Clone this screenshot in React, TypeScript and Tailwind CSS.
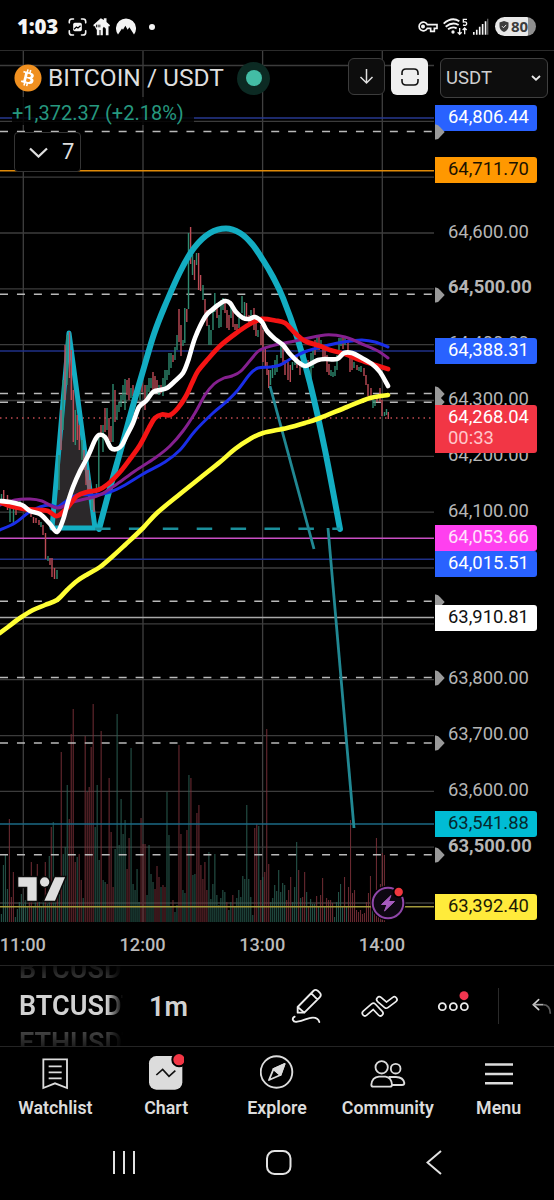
import type { ReactNode } from 'react';
import clsx from 'clsx';
import { FaBitcoin } from 'react-icons/fa';

type Point = [number, number];
type Candle = [number, number, number, 'r' | 'g'];

const CHART_TOP = 50;
const CHART_RIGHT = 434;
const VOLUME_BASE = 922;

const gridRows = [65.5, 121.3, 177.2, 233, 288.9, 344.7, 400.5, 456.4, 512.2, 568, 623.9, 679.7, 735.6, 791.4, 847.2, 903];
const gridCols = [23.3, 143, 262.6, 382.3];

const dashedLevels = [131.5, 294.3, 393.5, 402.2, 601.3, 677.5, 743, 854.7];

const solidLevels = [
  { y: 118, color: '#27388f' },
  { y: 170.7, color: '#e08a08' },
  { y: 351, color: '#1f3088' },
  { y: 538.2, color: '#c94fc4' },
  { y: 559.2, color: '#1f3088' },
  { y: 617.6, color: '#a9a9a9' },
  { y: 824, color: '#1b6a86' },
  { y: 906.7, color: '#a39a3c' },
];

const averages: { color: string; width: number; points: Point[] }[] = [
  {
    color: '#ffff35',
    width: 4.6,
    points: [[0, 633], [8, 627], [20, 618], [33, 610], [45, 605], [57, 600], [67, 590], [77, 581], [88, 574], [100, 567], [113, 556], [125, 545], [143, 528], [157, 513], [180, 494], [200, 478], [220, 462], [235, 449], [250, 439], [263, 433], [287, 428], [305, 423], [320, 418], [347, 407], [370, 398], [388, 395]],
  },
  {
    color: '#1a2ee8',
    width: 3,
    points: [[0, 530], [15, 523], [28, 513], [40, 507], [50, 505], [57, 507], [65, 502], [77, 495], [95, 495], [110, 492], [125, 485], [143, 474], [165, 462], [180, 450], [195, 431], [213, 413], [225, 403], [237, 391], [250, 374], [258, 368], [270, 367], [280, 365], [292, 358], [307, 351], [325, 346], [338, 343], [352, 341], [362, 340], [375, 342], [388, 347]],
  },
  {
    color: '#85208f',
    width: 3,
    points: [[0, 505], [15, 500], [30, 499], [42, 501], [57, 508], [70, 503], [85, 499], [100, 495], [117, 484], [135, 471], [155, 458], [170, 446], [183, 431], [195, 413], [205, 395], [214, 384], [224, 378], [232, 376], [241, 371], [253, 357], [260, 350], [275, 345], [295, 341], [325, 335], [345, 337], [362, 344], [378, 351], [388, 358]],
  },
  {
    color: '#f51414',
    width: 4.8,
    points: [[0, 502], [10, 506], [25, 509], [38, 510], [48, 511], [57, 516], [67, 508], [77, 496], [87, 492], [98, 490], [108, 484], [120, 472], [130, 459], [140, 445], [150, 426], [155, 418], [162, 414.5], [170, 415], [178, 408], [186, 396], [192, 383], [198, 371], [208, 359], [220, 346], [235, 334], [250, 324], [262, 319], [275, 320.5], [285, 323], [295, 333], [305, 341], [320, 346], [330, 350], [345, 354], [360, 360], [375, 365], [388, 369]],
  },
  {
    color: '#ffffff',
    width: 4.6,
    points: [[0, 501], [10, 502], [22, 505], [30, 511], [40, 514], [50, 524], [57, 532], [63, 520], [68, 502], [73, 487], [80, 471], [88, 456], [95, 440], [99, 435], [105, 437], [111, 448], [117, 449], [122, 445], [127, 435], [133, 423], [139, 407], [146, 401], [153, 392], [160, 390], [167, 388], [175, 381], [183, 373], [188, 361], [195, 338], [205, 317], [212, 310], [218, 305], [225, 301], [230, 303], [236, 312], [243, 318], [249, 319], [255, 317], [262, 322], [267, 331], [275, 339], [283, 345], [290, 354], [298, 362], [305, 366], [312, 363], [318, 360], [325, 359], [337, 359], [344, 353], [352, 353], [362, 358], [372, 364], [380, 372], [388, 386]],
  },
];

const arc: Point[] = [[99, 529], [110, 488], [123, 442], [134, 402], [145, 364], [154, 334], [164, 308], [180, 272], [194, 248], [210, 233], [226, 228.5], [240, 233], [252, 244], [263, 260], [273, 277], [283, 298], [297, 337], [310, 383], [325, 450], [340, 529]];

const candles: Candle[] = [
  [1.5, 494, 506, 'g'], [3.7, 490, 502, 'r'], [7.5, 495, 510, 'r'], [10, 500, 522, 'g'], [13.5, 505, 524, 'g'], [16, 503, 515, 'r'], [20, 500, 508, 'g'],
  [31, 512, 517, 'r'], [33.5, 517, 523, 'r'], [36, 518, 523, 'r'], [39, 520, 525, 'r'], [41, 522, 527, 'g'], [43, 525, 535, 'r'], [45.5, 533, 559, 'r'], [48, 556, 561, 'g'], [50, 558, 565, 'r'], [52, 558, 577, 'r'], [54.5, 568, 579, 'r'], [57, 570, 579, 'g'],
  [59, 455, 490, 'g'], [61, 410, 450, 'r'], [63, 380, 430, 'g'], [65, 345, 400, 'r'], [67, 335, 385, 'g'], [69.5, 332, 378, 'r'], [71.3, 350, 400, 'r'], [73.3, 390, 442, 'r'], [75.3, 410, 445, 'g'], [77.3, 415, 440, 'r'], [79.3, 425, 450, 'r'], [82, 440, 460, 'g'], [84, 450, 470, 'r'], [86, 460, 485, 'r'], [88, 470, 495, 'r'], [90, 480, 500, 'r'], [92, 490, 510, 'g'], [94, 497, 512, 'r'], [96.5, 484, 495, 'g'], [98.8, 435, 490, 'g'],
  [101, 425, 436, 'r'], [103, 425, 452, 'g'], [105, 408, 432, 'r'], [107, 408, 430, 'g'], [109, 418, 440, 'r'], [111, 426, 442, 'r'], [113, 384, 442, 'g'], [115, 390, 422, 'r'], [117, 405, 420, 'g'], [119, 402, 412, 'g'], [121, 395, 407, 'g'], [123, 385, 400, 'g'], [125, 379, 410, 'g'], [127, 380, 395, 'r'], [129, 378, 400, 'r'], [131, 388, 398, 'g'], [133, 385, 396, 'r'],
  [140, 375, 400, 'g'], [142, 367, 392, 'r'], [145, 385, 410, 'r'], [147, 385, 402, 'g'], [149, 378, 392, 'g'], [151, 378, 388, 'g'], [153, 372, 390, 'r'], [155, 376, 390, 'r'], [157, 380, 388, 'r'], [159, 385, 395, 'g'], [161, 385, 393, 'r'], [163, 378, 396, 'g'], [165, 370, 390, 'g'], [167, 370, 380, 'g'], [169, 353, 375, 'g'], [171, 353, 368, 'g'], [173, 355, 362, 'r'], [175, 347, 360, 'g'], [177, 335, 350, 'g'], [179, 309, 342, 'r'], [181, 325, 356, 'r'], [183, 340, 346, 'g'], [184.8, 308, 343, 'g'], [186.8, 309, 322, 'r'], [188.5, 233, 309, 'g'], [190.6, 227, 264, 'r'], [192.5, 255, 275, 'g'], [194.5, 260, 280, 'r'], [196.5, 253, 265, 'g'], [198.6, 253, 290, 'r'], [200.6, 275, 291, 'r'], [203, 285, 300, 'g'], [205, 299, 319, 'r'], [207, 310, 326, 'r'], [209, 325, 345, 'g'], [211, 330, 345, 'g'], [213, 310, 330, 'g'], [214.8, 293, 312, 'g'], [217, 308, 318, 'r'], [219, 315, 328, 'g'], [221, 300, 327, 'g'], [223, 298, 310, 'g'], [225, 303, 313, 'r'], [227, 310, 328, 'r'], [229, 315, 330, 'r'], [231, 305, 318, 'g'], [233, 310, 327, 'r'], [235, 324, 330, 'r'], [237, 324, 332, 'r'], [239, 318, 328, 'g'], [242, 296, 313, 'g'], [244.5, 302, 317, 'g'], [246.5, 303, 320, 'r'], [249, 315, 325, 'r'], [251, 310, 322, 'g'], [254, 308, 330, 'r'], [256, 320, 336, 'r'], [258, 330, 337, 'g'], [261, 325, 345, 'r'], [263, 330, 362, 'r'], [265.3, 348, 367, 'r'], [267, 362, 375, 'r'], [268.7, 370, 388, 'r'], [270.5, 370, 385, 'g'], [272.5, 365, 378, 'g'], [275, 360, 375, 'g'], [277, 355, 372, 'g'], [281, 345, 358, 'g'], [283, 348, 365, 'r'], [285, 360, 375, 'r'], [288, 362, 380, 'r'], [290.3, 365, 382, 'r'], [292.5, 362, 370, 'g'], [295, 355, 365, 'g'], [297, 355, 368, 'r'], [300, 363, 375, 'r'], [302, 358, 368, 'g'], [305, 350, 362, 'g'], [308, 360, 380, 'r'], [311, 353, 380, 'g'], [313, 350, 368, 'g'], [315, 340, 355, 'r'], [317, 336, 350, 'g'], [319, 336, 350, 'r'], [321, 340, 348, 'g'], [323, 345, 358, 'r'], [325, 345, 357, 'r'], [327, 355, 372, 'r'], [329, 364, 375, 'r'], [331, 370, 376, 'g'], [333, 372, 377, 'g'], [335, 366, 376, 'g'], [337, 355, 370, 'g'], [339, 338, 350, 'g'], [341, 338, 346, 'g'], [343, 336, 349, 'r'], [345, 337, 345, 'g'], [348, 340, 355, 'r'], [350, 355, 372, 'r'], [352, 358, 370, 'r'], [354, 362, 368, 'g'], [357, 365, 370, 'r'], [359, 367, 371, 'g'], [361, 366, 372, 'g'], [364, 368, 376, 'r'], [366, 375, 385, 'r'], [368, 384, 396, 'r'], [371, 388, 400, 'r'], [373, 395, 408, 'g'], [375, 400, 406, 'g'], [377, 396, 402, 'r'], [380, 388, 402, 'r'], [382, 400, 416, 'r'], [384.5, 412, 416, 'g'], [386.5, 409, 415, 'g'], [388.3, 412, 419, 'r'],
];

// one bar per minute, negative heights are down bars
const volumes = [
  8, 57, 67, 33, -103, -25, -50, 5, 13, 20, 28, 18, 22, 15, -20, -60, 16, 22, -58, 20, 15, 22, -60, 18, 66, -95, 100, 30, -32, 28,
  -170, 68, 75, 137, -103, -188, -213, -60, 65, -68, -42, 24, -186, -130, -135, -175, -218, 95, 137, 62, -191, 42, 40, -38, -144, -90, -35, 73, 208, 77,
  123, 88, 102, -53, -84, 174, 38, 32, 53, 20, -104, -78, -78, 27, 77, 48, 40, -33, -56, -45, 35, -37, -35, 130, 87, 15, -22, 10, 17, -177,
  -88, 32, 29, -92, 147, -144, 47, 48, -109, -117, -57, -43, -60, -32, 70, 23, 38, 68, 27, 17, 24, 32, 30, -20, 12, 20, -27, 15, 24, 32,
  25, 46, 43, 117, 43, 25, 7, -94, -98, 96, -42, 45, -50, -193, -58, 20, 24, 37, 31, 52, 30, 39, 37, -22, -32, -45, 20, 35, 80, -52,
  24, -25, -50, 30, -15, 23, 18, 18, -26, 15, -27, -44, 15, -24, -22, -22, -19, 5, 20, 30, 38, 15, -45, 15, -35, -102, -29, -32, -12, -10,
  -12, -8, -9, -20, -29, -46, 15, -14, -84, -20, -38, -69, -67,
];

type Mark =
  | { kind: 'price'; y: number; text: string; bold?: boolean }
  | { kind: 'flag'; y: number }
  | { kind: 'badge'; y: number; text: string; sub?: string; tone: string };

// later marks cover earlier ones
const axisMarks: Mark[] = [
  { kind: 'price', y: 231.5, text: '64,600.00' },
  { kind: 'price', y: 287.3, text: '64,500.00', bold: true },
  { kind: 'price', y: 343.2, text: '64,400.00' },
  { kind: 'price', y: 398.8, text: '64,300.00' },
  { kind: 'price', y: 454.8, text: '64,200.00' },
  { kind: 'price', y: 510.6, text: '64,100.00' },
  { kind: 'price', y: 678.2, text: '63,800.00' },
  { kind: 'price', y: 734, text: '63,700.00' },
  { kind: 'price', y: 789.8, text: '63,600.00' },
  { kind: 'price', y: 845.6, text: '63,500.00', bold: true },
  { kind: 'badge', y: 105, text: '64,806.44', tone: 'bg-[#2962ff] text-white' },
  { kind: 'flag', y: 132 },
  { kind: 'flag', y: 295 },
  { kind: 'flag', y: 394 },
  { kind: 'flag', y: 402 },
  { kind: 'flag', y: 601.5 },
  { kind: 'flag', y: 678 },
  { kind: 'flag', y: 743 },
  { kind: 'flag', y: 855 },
  { kind: 'badge', y: 157.3, text: '64,711.70', tone: 'bg-[#ff9800] text-[#1a1200]' },
  { kind: 'badge', y: 338, text: '64,388.31', tone: 'bg-[#2962ff] text-white' },
  { kind: 'badge', y: 405, text: '64,268.04', sub: '00:33', tone: 'bg-[#f23645] text-white' },
  { kind: 'badge', y: 525, text: '64,053.66', tone: 'bg-[#ff40ef] text-[#ffe2fc]' },
  { kind: 'badge', y: 551.2, text: '64,015.51', tone: 'bg-[#2962ff] text-white' },
  { kind: 'badge', y: 604.5, text: '63,910.81', tone: 'bg-white text-[#111111]' },
  { kind: 'badge', y: 810.7, text: '63,541.88', tone: 'bg-[#00bcd4] text-[#06292e]' },
  { kind: 'badge', y: 894, text: '63,392.40', tone: 'bg-[#ffeb3b] text-[#1c1a05]' },
];

const times = ['11:00', '12:00', '13:00', '14:00'];

function smooth(points: Point[]) {
  let d = `M${points[0][0]} ${points[0][1]}`;
  for (let i = 0; i < points.length - 1; i++) {
    const p0 = points[i - 1] ?? points[i];
    const p1 = points[i];
    const p2 = points[i + 1];
    const p3 = points[i + 2] ?? p2;
    d += `C${p1[0] + (p2[0] - p0[0]) / 6} ${p1[1] + (p2[1] - p0[1]) / 6} ${p2[0] - (p3[0] - p1[0]) / 6} ${p2[1] - (p3[1] - p1[1]) / 6} ${p2[0]} ${p2[1]}`;
  }
  return d;
}

function StatusBar() {
  return (
    <div className="flex h-[50px] items-center pt-[3px] pl-[17px] pr-[18px] text-[#f4f4f4]">
      <span className="w-[51px] font-['Open_Sans'] text-[20.500px] font-extrabold leading-none tracking-[-0.2px]">1:03</span>
      <svg className="h-[18px] w-[19px]" viewBox="205 51 57 56" fill="none" stroke="currentColor" strokeWidth="5">
        <path d="M208 66V62Q208 54 216 54H221M246 54H251Q259 54 259 62V66M259 91V96Q259 104 251 104H246M221 104H216Q208 104 208 96V91" strokeLinecap="round" />
        <rect x="220" y="66" width="27" height="26" rx="5" fill="currentColor" stroke="none" />
        <path d="M223 86l7-7 5 3 8-7" stroke="#000" strokeWidth="4" />
      </svg>
      <svg className="ml-[6px] h-[18px] w-[17px]" viewBox="280 52 50 54" fill="currentColor">
        <path d="M281 72L303 53L312 58V53H320V64L330 73V77H326V104H318V84L312 78L309 83V104H302V88H299V104H291V88L286 80V77H281Z" />
        <path d="M290 72V80M295 72V80M300 72V80M313 88V104" stroke="#000" strokeWidth="2.5" />
      </svg>
      <svg className="ml-[6px] h-[17px] w-[20px]" viewBox="348 54 60 50" fill="currentColor">
        <path d="M354 103A30 30 0 1 1 402 103L388 81L383 89L376 77L369 89L366 85Z" />
      </svg>
      <span className="ml-[13px] size-1.5 rounded-full bg-current" />
      <div className="ml-auto flex items-center">
        <svg className="h-[13px] w-[20px]" viewBox="425 62 60 37" fill="none" stroke="currentColor" strokeWidth="5">
          <path d="M453 75A13 13 0 1 0 453 86H463V95H474V86H482V75Z" />
          <circle cx="440" cy="80.500" r="3.500" fill="currentColor" />
        </svg>
        <svg className="ml-[5px] h-[18px] w-[25px]" viewBox="500 52 75 54" fill="none" stroke="currentColor" strokeWidth="5.500">
          <path d="M502 69Q527 47 549 62M508 78Q529 62 547 73M515 86Q529 76 541 83" />
          <circle cx="530" cy="94" r="5" fill="currentColor" stroke="none" />
          <path d="M572 56H561V64Q571 62 571 69T560 73" strokeWidth="4" />
          <path d="M550 82V101M544 95L550 101L556 95M565 101V82M559 88L565 82L571 88" strokeWidth="4" />
        </svg>
        <svg className="ml-[4px] h-[17px] w-[17px]" viewBox="588 53 50 52" fill="currentColor">
          <path d="M590 96h5v8h-5zM599 89h5v15h-5zM608 80h5v24h-5zM617 71h5v33h-5zM626 63h5v41h-5z" />
          <path d="M633 55h4v49h-4z" opacity="0.4" />
        </svg>
        <div className="ml-[6px] flex h-[19px] w-[41px] items-center rounded-full bg-[linear-gradient(90deg,#e8e8e8_80%,#8e8e8e_80%)] pl-[4px] text-[#3c3c3c]">
          <svg className="h-[11px] w-[10px]" viewBox="0 0 10 11">
            <path d="M5 0L9.500 1.500V5Q9.500 9 5 11Q0.500 9 0.500 5V1.500Z" fill="currentColor" />
            <path d="M3 5.200L4.500 6.700L7.200 3.900" fill="none" stroke="#e8e8e8" />
          </svg>
          <span className="ml-[2px] font-['Open_Sans'] text-[15px] font-bold leading-none">80</span>
        </div>
      </div>
    </div>
  );
}

function ChartCanvas() {
  return (
    <svg className="block h-[872px] w-[554px]" viewBox="0 50 554 872" fill="none">
      {gridCols.map((x) => (
        <path key={x} d={`M${x} ${CHART_TOP}V${VOLUME_BASE}`} stroke="#404040" strokeWidth="1.3" />
      ))}
      {gridRows.map((y) => (
        <path key={y} d={`M0 ${y}H${CHART_RIGHT}`} stroke="#3c3c3c" strokeWidth="1.3" />
      ))}

      {/* Volume */}
      {volumes.map((v, i) => (
        <path
          key={i}
          d={`M${1.4 + i * 1.995} ${VOLUME_BASE}v${-Math.abs(v)}`}
          stroke={v < 0 ? '#7a3038' : '#2c6155'}
          strokeWidth="1.100"
          opacity="0.850"
        />
      ))}

      {/* Levels */}
      {solidLevels.map((level) => (
        <path key={level.y} d={`M0 ${level.y}H${CHART_RIGHT}`} stroke={level.color} strokeWidth="1.500" />
      ))}
      {dashedLevels.map((y) => (
        <path key={y} d={`M0 ${y}H432`} stroke="#b9b9b9" strokeWidth="1.500" strokeDasharray="8 8.950" />
      ))}
      <path d="M0 418H434" stroke="#c04a50" strokeWidth="1.500" strokeDasharray="1.500 4" />

      {/* Drawings */}
      <path d="M53 528L69 333L95 528Z" fill="#2b282a" />
      <path d="M52 528L69 333L95 528Z" stroke="#13adc2" strokeWidth="5" strokeLinejoin="round" />
      {candles.map(([x, top, bottom, dir]) => (
        <path key={x} d={`M${x} ${top}V${bottom}`} stroke={dir === 'r' ? '#bd4b56' : '#2e8a70'} strokeWidth="1.400" />
      ))}
      <path d={smooth(arc)} stroke="#13adc2" strokeWidth="6" strokeLinecap="round" />
      <path d="M95 528.700H340" stroke="#1b8f9b" strokeWidth="2.600" strokeDasharray="15.500 18.400" />
      <path d="M270 386L314 549" stroke="#218893" strokeWidth="2.800" />
      <path d="M328 528L354 828" stroke="#218893" strokeWidth="2.800" />

      {averages.map((line) => (
        <path key={line.color} d={smooth(line.points)} stroke={line.color} strokeWidth={line.width} strokeLinejoin="round" strokeLinecap="round" />
      ))}

      {/* TradingView mark */}
      <g transform="translate(0 690) scale(0.3333)" fill="#dedede" stroke="#0a0a0a" strokeWidth="9" paintOrder="stroke">
        <path d="M55 562H110V632H82V590H55Z" />
        <path d="M165 562H195L165 632H133Z" />
        <circle cx="134" cy="576" r="14" />
      </g>

      {/* Flash news */}
      <circle cx="388" cy="903" r="17.500" fill="#000" />
      <circle cx="388" cy="903" r="15.300" fill="#0d0711" stroke="#8f46a8" strokeWidth="2" />
      <path d="M391 895.500L381.500 904.500H387L384.500 911L394.500 901.500H388.500Z" fill="#a65bbd" stroke="#a65bbd" strokeLinejoin="round" />
      <circle cx="398.700" cy="892" r="6" fill="#000" />
      <circle cx="398.700" cy="892" r="4.200" fill="#f0383f" />
    </svg>
  );
}

function AxisMark({ mark }: { mark: Mark }) {
  if (mark.kind === 'flag') {
    return (
      <svg className="absolute left-0 h-4 w-2.5" style={{ top: mark.y - CHART_TOP - 8 }} viewBox="0 0 10 16">
        <path d="M0 0.500Q3 0 5 3L9.700 8L5 13Q3 16 0 15.500Z" fill="#999999" />
      </svg>
    );
  }
  if (mark.kind === 'price') {
    return (
      <span
        className={clsx('absolute left-[13px] leading-6 text-[#b5b5b5]', mark.bold && 'font-bold')}
        style={{ top: mark.y - CHART_TOP - 12 }}
      >
        {mark.text}
      </span>
    );
  }
  return (
    <div
      className={clsx('absolute left-0 w-[102px] rounded-r-[3px] pl-[13px]', mark.sub ? 'h-[48px]' : 'h-[26px]', mark.tone)}
      style={{ top: mark.y - CHART_TOP }}
    >
      <div className="h-6 leading-6">{mark.text}</div>
      {mark.sub && <div className="-mt-px h-5 leading-5 text-[#ffc6ca]">{mark.sub}</div>}
    </div>
  );
}

function ChartHeader() {
  return (
    <div className="pt-[7px] pr-[6px] pl-[14px]">
      <div className="flex items-start">
        <div className="flex h-10 items-center">
          <div className="size-7 rounded-full bg-[radial-gradient(circle,white_60%,transparent_62%)]">
            <FaBitcoin className="size-7 text-[#f09020]" />
          </div>
          <span className="ml-[6px] w-[177px] whitespace-nowrap text-[24.500px] leading-none text-[#dedede]">BITCOIN / USDT</span>
          <span className="ml-[12px] flex size-[33px] items-center justify-center rounded-full bg-[#0c2a23]">
            <span className="size-4 rounded-full bg-[#43bda5]" />
          </span>
        </div>
        <div className="ml-auto flex">
          <div className="flex h-[37px] w-[37px] items-center justify-center rounded-md border border-[#3c3c3c] bg-[#0d0d0d]">
            <svg className="h-[17px] w-[15px]" viewBox="0 0 15 17" fill="none" stroke="#e0e0e0" strokeWidth="1.500">
              <path d="M7.500 1V15M1.500 9L7.500 15L13.500 9" />
            </svg>
          </div>
          <div className="ml-[6px] flex h-[37px] w-[37px] items-center justify-center rounded-md bg-[#efefef]">
            <svg className="size-[18px]" viewBox="0 0 18 18" fill="none" stroke="#111" strokeWidth="1.600">
              <path d="M1 7V5Q1 1 5 1H13Q17 1 17 5V7M17 11V13Q17 17 13 17H5Q1 17 1 13V11" />
            </svg>
          </div>
          <div className="ml-[12px] flex h-[40px] w-[108px] items-center justify-between rounded-md border border-[#404040] bg-[#0d0d0d] pr-1.5 pl-[5px]">
            <span className="text-[18.500px] leading-none text-[#d0d0d0]">USDT</span>
            <svg className="h-[6px] w-[10px]" viewBox="0 0 10 6" fill="none" stroke="#e8e8e8" strokeWidth="1.800">
              <path d="M1 1L5 4.700L9 1" />
            </svg>
          </div>
        </div>
      </div>
      <div className="-mt-px -ml-[2px] flex h-[28px] w-[182px] items-end bg-black/85">
        <span className="whitespace-nowrap text-[20px] leading-[24px] text-[#26987f]">+1,372.37 (+2.18%)</span>
      </div>
      <div className="mt-[7px] flex h-[40px] w-[67px] items-center rounded border border-[#343434] bg-black pl-[14px]">
        <svg className="h-[11px] w-[19px]" viewBox="0 0 19 11" fill="none" stroke="#dedede" strokeWidth="2.300">
          <path d="M1 1.500L9.500 9.500L18 1.500" />
        </svg>
        <span className="ml-[14px] text-[22px] leading-none text-[#dedede]">7</span>
      </div>
    </div>
  );
}

function Toolbar() {
  return (
    <div className="flex h-[82px] items-center border-y border-[#242424]">
      <div className="h-[80px] w-[149px] overflow-hidden pl-[19px]">
        <div className="-mt-[15px] w-[104px] overflow-hidden text-[27px] font-semibold leading-[37px] text-[#d2d2d2] [mask-image:linear-gradient(90deg,#000_84%,transparent)]">
          <div className="bg-[linear-gradient(#111_40%,#555)] bg-clip-text text-transparent">BTCUSDT</div>
          <div>BTCUSDT</div>
          <div className="bg-[linear-gradient(#555,#111_70%)] bg-clip-text text-transparent">ETHUSDT</div>
        </div>
      </div>
      <span className="w-[121px] pt-0.5 text-[27px] font-semibold leading-none text-[#d2d2d2]">1m</span>
      <div className="flex w-[73.500px] justify-center">
        <svg className="h-9 w-8" viewBox="42 114 96 108" fill="none" stroke="#ededed" strokeWidth="5.500" strokeLinejoin="round" strokeLinecap="round">
          <path d="M62 171L109 123Q115 117 122 122L128 128Q135 135 128 142L82 188H62ZM62 171L82 188M103 130L121 148" />
          <path d="M53 200C43 205 47 218 61 215C84 211 91 203 108 203Q123 203 127 216" />
        </svg>
      </div>
      <div className="flex w-[73.500px] justify-center">
        <svg className="h-6 w-[38px]" viewBox="253 132 114 69" fill="none" strokeLinejoin="round" strokeLinecap="round">
          <path d="M265 188L290 166L311 188M308 147L329 165L353 147" stroke="#ededed" strokeWidth="21" />
          <path d="M265 188L290 166L311 188M308 147L329 165L353 147" stroke="#000" strokeWidth="11" />
        </svg>
      </div>
      <div className="flex w-[73.500px] justify-center">
        <svg className="h-[33px] w-[34px]" viewBox="482 119 102 99" fill="none" stroke="#ededed" strokeWidth="5.500">
          <circle cx="498" cy="169" r="10.500" />
          <circle cx="531" cy="169" r="10.500" />
          <circle cx="564" cy="169" r="10.500" />
          <circle cx="563" cy="136" r="18" fill="#000" stroke="none" />
          <circle cx="563" cy="136" r="13.500" fill="#f23650" stroke="none" />
        </svg>
      </div>
      <div className="ml-[7px] h-9 w-px bg-[#2a2a2a]" />
      <svg className="ml-[32px] h-[17px] w-[22px] shrink-0" viewBox="760 143 66 51" fill="none" strokeWidth="5">
        <path d="M783 148L767 163L783 178" stroke="#d0d0d0" strokeLinecap="round" />
        <path d="M767 163H796" stroke="#a8a8a8" />
        <path d="M796 163Q818 164 818 190" stroke="#5c5c5c" />
      </svg>
    </div>
  );
}

function NavItem({ label, children }: { label: string; children: ReactNode }) {
  return (
    <div className="flex flex-col items-center">
      <div className="flex h-[50px] w-full items-center justify-center">{children}</div>
      <span className="text-[17.800px] font-semibold leading-[22px] text-[#dcdcdc]">{label}</span>
    </div>
  );
}

function BottomNav() {
  return (
    <div className="grid h-[78px] w-[554px] grid-cols-5">
      <NavItem label="Watchlist">
        <svg className="mt-[4px] h-8 w-[26px]" viewBox="127 323 78 96" fill="none" stroke="#dcdcdc" strokeWidth="5.500">
          <path d="M131 327H202V413L166 399L131 413ZM147 348H186M147 366H186M147 384H186" />
        </svg>
      </NavItem>
      <NavItem label="Chart">
        <svg className="h-9 w-9" viewBox="445 315 108 108" fill="none">
          <rect x="448" y="321" width="100" height="101" rx="22" fill="#dcdcdc" />
          <path d="M470 378L489 361L508 382L527 365" stroke="#111" strokeWidth="5" />
          <circle cx="538" cy="332" r="23" fill="#000" />
          <circle cx="538" cy="332" r="17" fill="#f23645" />
        </svg>
      </NavItem>
      <NavItem label="Explore">
        <svg className="size-[34px]" viewBox="0 0 34 34" fill="none" stroke="#dcdcdc" strokeWidth="1.900" strokeLinejoin="round">
          <circle cx="16.500" cy="17" r="15.800" />
          <path d="M24.500 9L20.500 20L13.500 14ZM13.500 14L9 25L20.500 20" />
          <path d="M24.500 9L20.500 20L13.500 14Z" fill="#dcdcdc" />
        </svg>
      </NavItem>
      <NavItem label="Community">
        <svg className="mt-[3px] h-7 w-9" viewBox="281 329 108 84" fill="none" stroke="#dcdcdc" strokeWidth="5.500">
          <circle cx="316" cy="351" r="18.500" />
          <circle cx="358" cy="355" r="14.500" />
          <path d="M308 379H327Q345 381 347 403Q347 409 340 409H291Q285 409 285 403Q287 381 308 379Z" />
          <path d="M337 380H359Q381 381 384 398Q384 404 377 404H347" />
        </svg>
      </NavItem>
      <NavItem label="Menu">
        <svg className="mt-[3px] h-6 w-7" viewBox="0 0 28 24" stroke="#dcdcdc" strokeWidth="2.600">
          <path d="M0 2.500H28M0 12H28M0 21.300H28" />
        </svg>
      </NavItem>
    </div>
  );
}

function SystemNav() {
  return (
    <div className="flex h-[75px] pt-[25px] pl-[112px]">
      <svg className="h-[25px] w-6" viewBox="0 0 24 25" stroke="#e2e2e2" strokeWidth="2">
        <path d="M2 1V24M12 1V24M22 1V24" />
      </svg>
      <svg className="ml-[130px] h-[25px] w-[26px]" viewBox="0 0 26 25" fill="none" stroke="#e2e2e2" strokeWidth="2">
        <rect x="1" y="1" width="23.500" height="23" rx="7.500" />
      </svg>
      <svg className="ml-[134px] h-[25px] w-4" viewBox="0 0 16 25" fill="none" stroke="#e2e2e2" strokeWidth="2">
        <path d="M15 1L1.500 12.500L15 24" />
      </svg>
    </div>
  );
}

export default function App() {
  return (
    <div className="h-[1200px] w-[554px] overflow-hidden bg-black font-[Roboto,sans-serif]">
      <StatusBar />

      {/* Chart */}
      <div className="relative h-[872px]">
        <ChartCanvas />
        <div className="absolute inset-x-0 top-0 border-t border-[#2b2b2b]">
          <ChartHeader />
        </div>
        <div className="absolute top-0 left-[435px] text-[18.400px]">
          {axisMarks.map((mark, i) => (
            <AxisMark key={i} mark={mark} />
          ))}
        </div>
      </div>

      {/* Time axis */}
      <div className="-ml-[37px] flex h-[43px] text-[18.200px] font-medium leading-[45px] text-[#bababa]">
        {times.map((time) => (
          <span key={time} className="w-[119.700px] shrink-0 text-center">
            {time}
          </span>
        ))}
      </div>

      <Toolbar />
      <BottomNav />
      <SystemNav />
    </div>
  );
}
